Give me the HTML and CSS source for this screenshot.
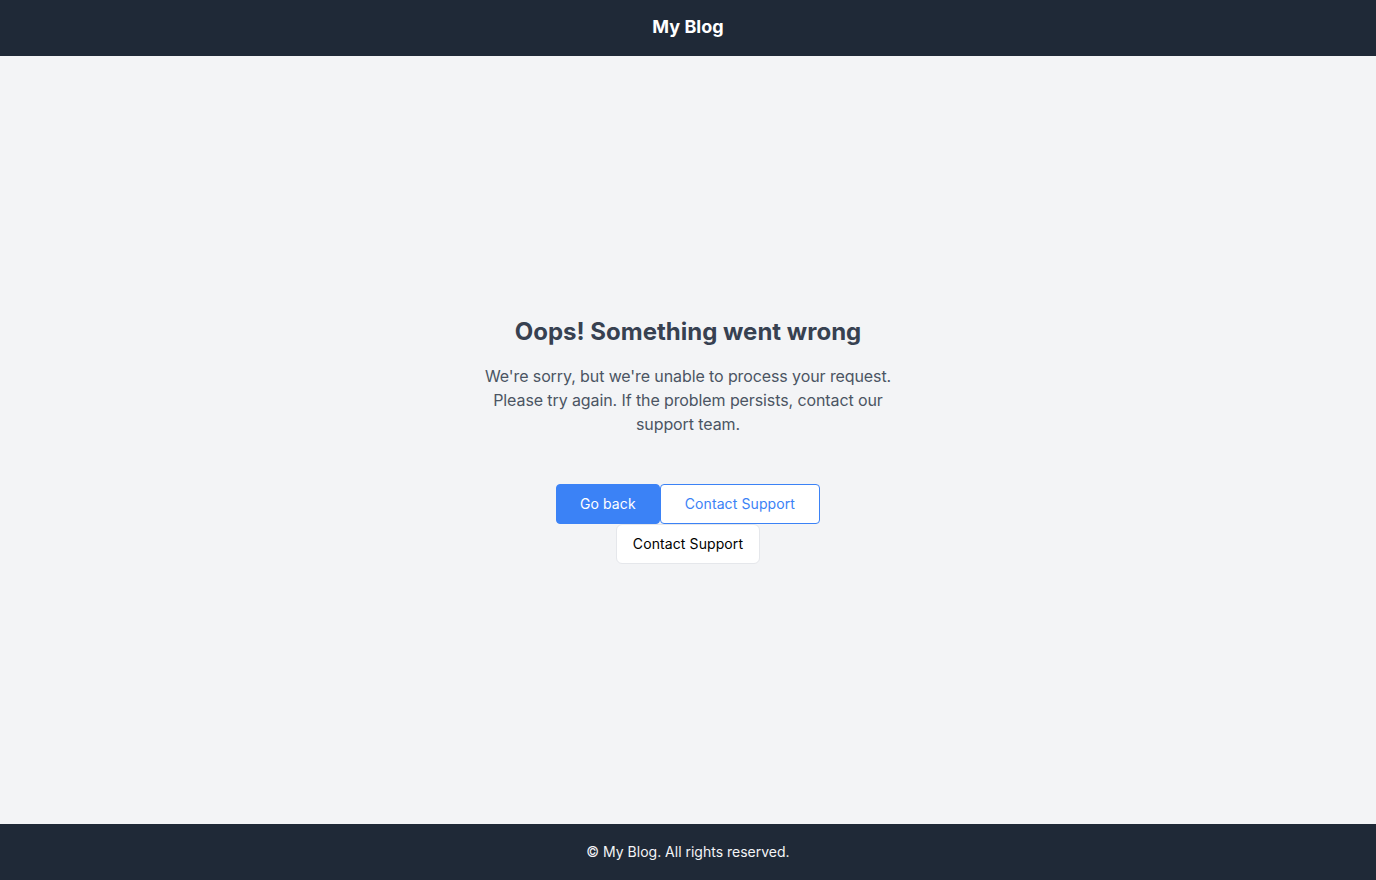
FILE: index.html
```html
<!DOCTYPE html>
<html lang="en">
<head>
<meta charset="utf-8">
<title>My Blog</title>
<link rel="stylesheet" href="styles.css">
</head>
<body>
<div class="page">
  <header class="site-header">
    <h1 class="brand">My Blog</h1>
  </header>
  <main class="main">
    <div class="error">
      <h2 class="error-title">Oops! Something went wrong</h2>
      <p class="error-text">We're sorry, but we're unable to process your request. Please try again. If the problem persists, contact our support team.</p>
      <div class="actions">
        <button class="btn btn-primary">Go back</button>
        <button class="btn btn-outline">Contact Support</button>
      </div>
      <div class="actions-secondary">
        <button class="btn btn-plain">Contact Support</button>
      </div>
    </div>
  </main>
  <footer class="site-footer">
    <p class="footer-text">© My Blog. All rights reserved.</p>
  </footer>
</div>
</body>
</html>
```

FILE: styles.css
```css
* { box-sizing: border-box; }
html, body { margin: 0; padding: 0; }
body {
  font-family: Inter, "Noto Sans", sans-serif;
  background: #f3f4f6;
  color: #111827;
}
.page {
  min-height: 880px;
  display: flex;
  flex-direction: column;
}
.site-header {
  height: 56px;
  background: #1f2937;
  display: flex;
  align-items: center;
  justify-content: center;
}
.brand {
  margin: 0 0 2px;
  font-size: 18px;
  line-height: 28px;
  font-weight: 700;
  color: #ffffff;
}
.main {
  flex: 1;
  display: flex;
  align-items: center;
  justify-content: center;
}
.error {
  width: 448px;
  text-align: center;
  display: flex;
  flex-direction: column;
  align-items: center;
}
.error-title {
  margin: 0;
  font-size: 24px;
  line-height: 32px;
  font-weight: 700;
  color: #374151;
}
.error-text {
  margin: 16px 0 0;
  font-size: 16px;
  line-height: 24px;
  color: #4b5563;
  letter-spacing: -0.1px;
}
.actions {
  margin-top: 48px;
  display: flex;
  justify-content: center;
}
.actions-secondary {
  display: flex;
  justify-content: center;
}
.btn {
  font-family: Inter, "Noto Sans", sans-serif;
  font-size: 14px;
  line-height: 20px;
  height: 40px;
  cursor: pointer;
  border-radius: 4px;
  letter-spacing: 0.1px;
}
.btn-primary {
  background: #3b82f6;
  color: #ffffff;
  border: 1px solid #3b82f6;
  padding: 0 23px;
}
.btn-outline {
  background: #ffffff;
  color: #3b82f6;
  border: 1px solid #3b82f6;
  padding: 0 24px;
}
.btn-plain {
  background: #ffffff;
  color: #000000;
  border: 1px solid #e5e7eb;
  padding: 0 16px;
  border-radius: 6px;
}
.site-footer {
  height: 56px;
  background: #1f2937;
  display: flex;
  align-items: center;
  justify-content: center;
}
.footer-text {
  margin: 0 0 2px;
  font-size: 14px;
  color: #f3f4f6;
}
```
